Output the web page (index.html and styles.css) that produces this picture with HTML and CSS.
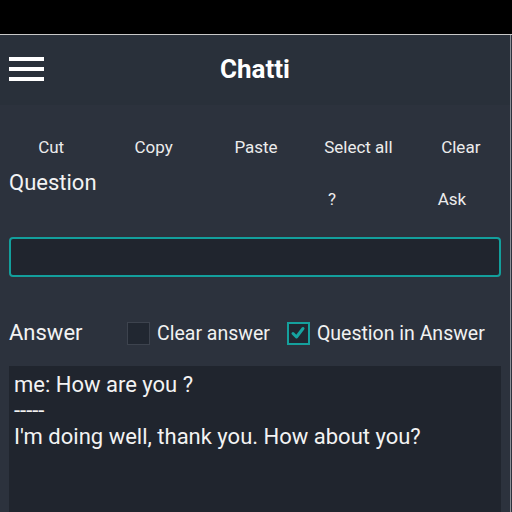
FILE: index.html
```html
<!DOCTYPE html>
<html>
<head>
<meta charset="utf-8">
<link rel="stylesheet" href="styles.css">
</head>
<body>
<div class="statusbar"></div>
<div class="app">
  <header class="header">
    <div class="burger"><span></span><span></span><span></span></div>
    <h1 class="title">Chatti</h1>
  </header>
  <nav class="toolbar">
    <button class="tbtn">Cut</button>
    <button class="tbtn">Copy</button>
    <button class="tbtn">Paste</button>
    <button class="tbtn">Select all</button>
    <button class="tbtn">Clear</button>
  </nav>
  <div class="qrow">
    <div class="label">Question</div>
    <div class="qbtns">
      <button class="qbtn">?</button>
      <button class="qbtn">Ask</button>
    </div>
  </div>
  <div class="pad">
    <div class="input"></div>
  </div>
  <div class="arow">
    <div class="label">Answer</div>
    <label class="check"><span class="box"></span>Clear answer</label>
    <label class="check"><span class="box on"><svg viewBox="0 0 22 22" width="22" height="22"><path d="M6 11.5 L9.5 15 L16 6.5" fill="none" stroke="#16a3a0" stroke-width="3" stroke-linecap="round" stroke-linejoin="round"/></svg></span>Question in Answer</label>
  </div>
  <div class="pad">
    <div class="answer">me: How are you ?<br>-----<br>I'm doing well, thank you. How about you?</div>
  </div>
</div>
</body>
</html>
```
FILE: styles.css
```css
* { box-sizing: border-box; }
html, body { margin: 0; padding: 0; }
body {
  background: #2c323d;
  font-family: Roboto, "Noto Sans", sans-serif;
  color: #f1f1f1;
  width: 512px;
  height: 512px;
  overflow: hidden;
}
.statusbar {
  height: 35px;
  background: #000;
  border-bottom: 1px solid #c8c8c8;
}
.app {
  width: 511px;
  height: 477px;
  border-right: 1px solid #8a8f96;
  background: #2c323d;
}
.header {
  height: 70px;
  background: #29303a;
  display: flex;
  align-items: center;
  justify-content: center;
  position: relative;
}
.burger {
  position: absolute;
  left: 9px;
  top: 22px;
  width: 35px;
  display: flex;
  flex-direction: column;
  gap: 6px;
}
.burger span {
  display: block;
  height: 4px;
  background: #fff;
}
.title {
  margin: 0;
  font-size: 26px;
  font-weight: 700;
  color: #fff;
  margin-top: -2px;
}
.toolbar {
  display: grid;
  grid-template-columns: repeat(5, 1fr);
  width: 512px;
  padding-top: 30px;
}
.tbtn {
  background: none;
  border: none;
  color: #ececec;
  font-family: inherit;
  font-size: 17px;
  line-height: 24px;
  padding: 0;
}
.qrow {
  display: flex;
  justify-content: space-between;
  width: 512px;
  margin-top: 12px;
}
.label {
  font-size: 22px;
  line-height: 24px;
  padding-left: 9px;
  color: #f3f3f3;
}
.qbtns {
  display: flex;
  padding-top: 16px;
}
.qbtn {
  width: 120px;
  background: none;
  border: none;
  color: #ececec;
  font-family: inherit;
  font-size: 17px;
  line-height: 24px;
  padding: 0;
}
.pad {
  padding: 0 9px 0 9px;
}
.input {
  margin-top: 26px;
  height: 40px;
  background: #20252e;
  border: 2px solid #139f9c;
  border-radius: 4px;
}
.arow {
  display: flex;
  align-items: center;
  margin-top: 44px;
  height: 24px;
}
.arow .label {
  width: 127px;
}
.check {
  display: flex;
  align-items: center;
  font-size: 19.5px;
  color: #f1f1f1;
  margin-right: 17px;
}
.box {
  width: 23px;
  height: 23px;
  border: 1px solid #3d434e;
  background: #212731;
  margin-right: 7px;
  display: flex;
}
.box.on {
  border: 2px solid #15a09d;
}
.box svg { display: block; margin: -2px; }
.answer {
  margin-top: 21px;
  height: 160px;
  background: #20252e;
  padding: 6px 5px;
  font-size: 22px;
  line-height: 26px;
  color: #f3f3f3;
}
```
